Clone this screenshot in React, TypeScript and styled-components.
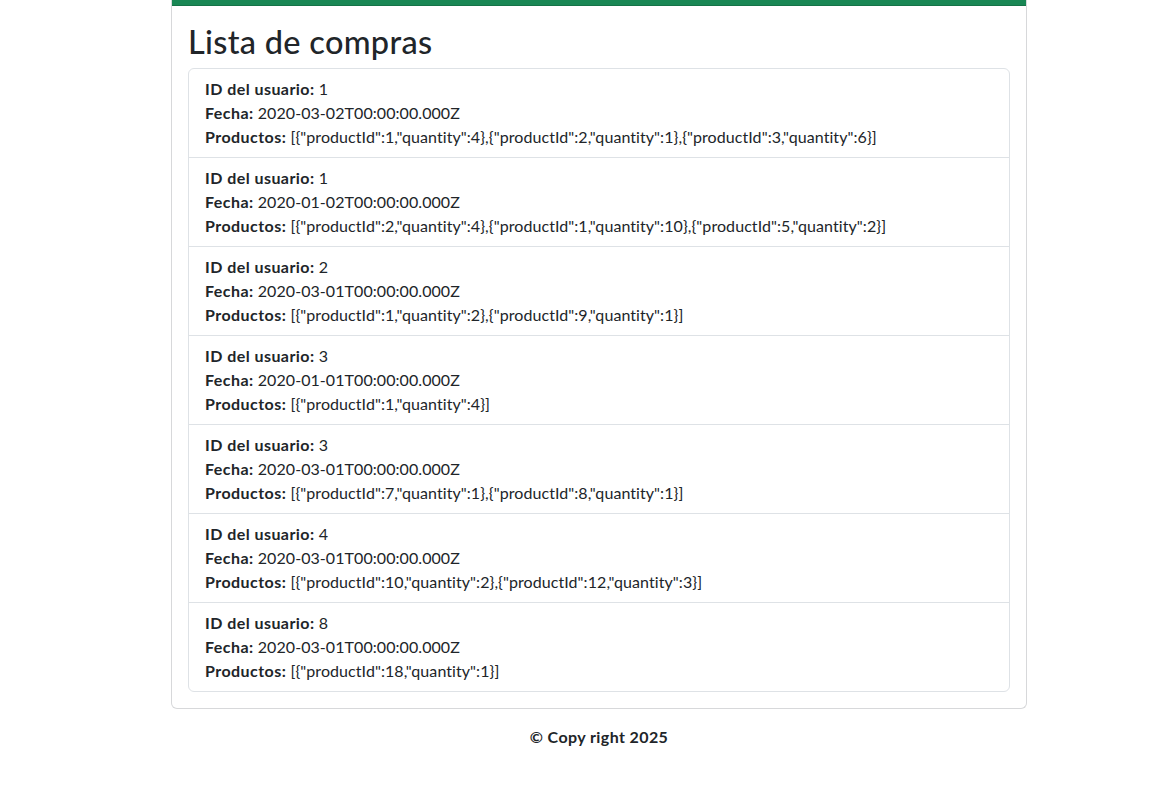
import React from "react";
import styled, { createGlobalStyle } from "styled-components";

const GlobalStyle = createGlobalStyle`
  html, body { margin: 0; padding: 0; background: #fff; }
  body {
    font-family: "Segoe UI", Lato, "Liberation Sans", sans-serif;
    font-size: 16px;
    line-height: 1.5;
    color: #212529;
    letter-spacing: 0.07px;
  }
  * { box-sizing: border-box; }
`;

const Page = styled.div`
  width: 856px;
  margin-left: 171px;
`;

const Card = styled.section`
  border: 1px solid #d7d8da;
  border-top: none;
  border-radius: 0 0 6px 6px;
  background: #fff;
`;

const TopBar = styled.div`
  height: 6px;
  background: #198754;
  border-bottom: 1px solid #157347;
`;

const CardBody = styled.div`
  padding: 16px;
`;

const Title = styled.h2`
  margin: 0 0 8px;
  padding-top: 1px;
  height: 38px;
  font-size: 32.5px;
  font-weight: 500;
  line-height: 38px;
  letter-spacing: 0.3px;
`;

const List = styled.ul`
  list-style: none;
  margin: 0;
  padding: 0;
  border: 1px solid #dee2e6;
  border-radius: 6px;
`;

const Item = styled.li`
  padding: 8px 16px;
  border-bottom: 1px solid #dee2e6;
  &:last-child { border-bottom: none; }
`;

const Line = styled.div`
  line-height: 24px;
`;

const Label = styled.strong`
  font-weight: 700;
  letter-spacing: 0.45px;
`;

const Footer = styled.footer`
  padding: 16px 0;
  text-align: center;
  font-weight: 700;
  letter-spacing: 0.4px;
`;

const purchases = [
  { user: 1, date: "2020-03-02T00:00:00.000Z", products: [[1, 4], [2, 1], [3, 6]] },
  { user: 1, date: "2020-01-02T00:00:00.000Z", products: [[2, 4], [1, 10], [5, 2]] },
  { user: 2, date: "2020-03-01T00:00:00.000Z", products: [[1, 2], [9, 1]] },
  { user: 3, date: "2020-01-01T00:00:00.000Z", products: [[1, 4]] },
  { user: 3, date: "2020-03-01T00:00:00.000Z", products: [[7, 1], [8, 1]] },
  { user: 4, date: "2020-03-01T00:00:00.000Z", products: [[10, 2], [12, 3]] },
  { user: 8, date: "2020-03-01T00:00:00.000Z", products: [[18, 1]] },
];

export default function App() {
  return (
    <>
      <GlobalStyle />
      <Page>
        <Card>
          <TopBar />
          <CardBody>
            <Title>Lista de compras</Title>
            <List>
              {purchases.map((p, i) => (
                <Item key={i}>
                  <Line>
                    <Label>ID del usuario:</Label> {p.user}
                  </Line>
                  <Line>
                    <Label>Fecha:</Label> {p.date}
                  </Line>
                  <Line>
                    <Label>Productos:</Label>{" "}
                    {JSON.stringify(p.products.map(([productId, quantity]) => ({ productId, quantity })))}
                  </Line>
                </Item>
              ))}
            </List>
          </CardBody>
        </Card>
        <Footer>© Copy right 2025</Footer>
      </Page>
    </>
  );
}
